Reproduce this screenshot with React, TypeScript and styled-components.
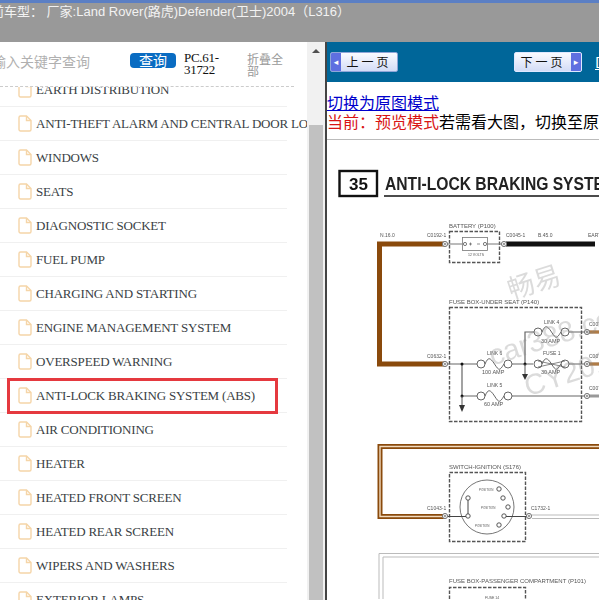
import React from "react";
import styled, { createGlobalStyle } from "styled-components";

const cjk = `"Noto Sans CJK SC", sans-serif`;

const Global = createGlobalStyle`
    html, body {
        margin: 0;
        padding: 0;
        width: 599px;
        height: 600px;
        overflow: hidden;
        background: #fff;
    }
`;

const Page = styled.div`
    display: flex;
    flex-direction: column;
    width: 599px;
    height: 600px;
    overflow: hidden;
`;

const TopBar = styled.div`
    height: 39px;
    flex: none;
    box-sizing: content-box;
    border-top: solid 3px #5b7fc4;
    background: #999;
    color: #f2f2f2;
    font: 13px/20px "Liberation Sans", ${cjk};
    white-space: nowrap;
    overflow: hidden;
`;

const TopText = styled.div`
    margin-left: -9px;
    margin-top: -1px;
`;

const Body = styled.div`
    flex: 1;
    display: flex;
    min-height: 0;
`;

const Side = styled.div`
    width: 307px;
    flex: none;
    display: flex;
    flex-direction: column;
    overflow: hidden;
`;

const Search = {
    Root: styled.div`
        height: 44px;
        flex: none;
        box-sizing: content-box;
        border-bottom: dashed 1px #ccc;
        margin-right: 13px;
        display: flex;
        align-items: flex-start;
    `,
    Placeholder: styled.span`
        width: 142px;
        margin-left: -22px;
        margin-top: 9px;
        margin-right: 10px;
        flex: none;
        font: 14px/20px ${cjk};
        color: #b0b0b0;
        white-space: nowrap;
    `,
    Button: styled.button`
        width: 46px;
        height: 15px;
        flex: none;
        margin-top: 11px;
        padding: 0;
        border: 0;
        border-radius: 4px;
        background: #0a6cc2;
        color: #fff;
        font: 14px/15px ${cjk};
    `,
    Code: styled.span`
        width: 50px;
        flex: none;
        margin: 10px 13px 0 8px;
        font: 13px/12px "Liberation Serif", serif;
        letter-spacing: -0.3px;
        color: #111;
    `,
    Collapse: styled.span`
        width: 38px;
        flex: none;
        margin-top: 11px;
        font: 12px/12px ${cjk};
        color: #999;
    `,
};

const List = styled.div`
    flex: 1;
    min-height: 0;
    overflow: hidden;
`;

const Rows = styled.ul`
    list-style: none;
    margin: -14px 0 0;
    padding: 0;
    width: 287px;
`;

const Row = styled.li<{ $marked?: boolean }>`
    position: relative;
    height: 33px;
    border-bottom: solid 1px #f0f0f0;
    display: flex;
    align-items: center;
    gap: 4px;
    padding-left: 18px;
    font: 13px/18px "Liberation Serif", serif;
    letter-spacing: -0.2px;
    color: #3a3f45;
    white-space: nowrap;
    &::after {
        content: "";
        display: ${p => (p.$marked ? "block" : "none")};
        position: absolute;
        left: 7px;
        top: -1px;
        width: 265px;
        height: 30px;
        border: solid 3px #e5393f;
    }
`;

const Scrollbar = {
    Track: styled.div`
        width: 18px;
        flex: none;
        box-sizing: border-box;
        padding: 0 2px;
        background: #f1f1f1;
        display: flex;
        flex-direction: column;
        align-items: stretch;
    `,
    Arrow: styled.div`
        width: 0;
        height: 0;
        margin: 7px auto 0;
        border-left: solid 4px transparent;
        border-right: solid 4px transparent;
        border-bottom: solid 4px #505050;
    `,
    Thumb: styled.div`
        flex: 1;
        margin-top: 72px;
        background: #c1c1c1;
    `,
};

const Divider = styled.div`
    width: 2px;
    flex: none;
    background: #444;
`;

const Main = styled.div`
    flex: 1;
    min-width: 0;
    display: flex;
    flex-direction: column;
    overflow: hidden;
`;

const Nav = styled.div`
    height: 40px;
    flex: none;
    background: #006699;
    display: flex;
    align-items: center;
    padding-left: 3px;
    white-space: nowrap;
`;

const PageButton = styled.div<{ $next?: boolean }>`
    width: 66px;
    height: 18px;
    flex: none;
    display: flex;
    flex-direction: ${p => (p.$next ? "row-reverse" : "row")};
    align-items: stretch;
    margin-left: ${p => (p.$next ? "116px" : "0")};
    border: solid 1px ${p => (p.$next ? "#dfe8ff" : "#8fa6d8")};
    border-radius: 2px;
    background: linear-gradient(#fafbff, #d3dcf6);
    color: #111;
    font: 12px/18px ${cjk};
    overflow: hidden;
`;

const PageCap = styled.span`
    width: 10px;
    flex: none;
    background: #5f6fe0;
    color: #fff;
    font: bold 9px/18px "DejaVu Sans", sans-serif;
    text-align: center;
`;

const PageLabel = styled.span`
    flex: 1;
    text-align: center;
    letter-spacing: 3px;
`;

const NavLink = styled.span`
    margin-left: 13px;
    color: #fff;
    font: 14px/18px ${cjk};
    text-decoration: underline;
`;

const Notice = styled.div`
    height: 58px;
    flex: none;
    box-sizing: border-box;
    padding-top: 11px;
    border-bottom: solid 1px #bbb;
    font: 16px/19px ${cjk};
    color: #000;
    white-space: nowrap;
`;

const SwitchLink = styled.a`
    display: block;
    color: #0000cc;
    text-decoration: underline;
`;

const Mode = styled.span`
    color: #d81414;
`;

const Diagram = styled.svg`
    display: block;
    flex: none;
    width: 272px;
    height: 459px;
    filter: blur(0.45px);
`;

const Label = styled.text<{ $size?: number }>`
    font-family: "Liberation Sans", sans-serif;
    font-size: ${p => p.$size ?? 5}px;
    fill: #555;
`;

const items = [
    "EARTH DISTRIBUTION",
    "ANTI-THEFT ALARM AND CENTRAL DOOR LOCKING",
    "WINDOWS",
    "SEATS",
    "DIAGNOSTIC SOCKET",
    "FUEL PUMP",
    "CHARGING AND STARTING",
    "ENGINE MANAGEMENT SYSTEM",
    "OVERSPEED WARNING",
    "ANTI-LOCK BRAKING SYSTEM (ABS)",
    "AIR CONDITIONING",
    "HEATER",
    "HEATED FRONT SCREEN",
    "HEATED REAR SCREEN",
    "WIPERS AND WASHERS",
    "EXTERIOR LAMPS",
];

const FileIcon = () => (
    <svg width="14" height="17" viewBox="0 0 14 17" fill="none" stroke="#f5d5a8" strokeWidth="1.4" style={{ flex: "none" }}>
        <path d="M1 2.500a1.500 1.500 0 0 1 1.500-1.500h6l4.500 4.500v9a1.500 1.500 0 0 1-1.500 1.500H2.500a1.500 1.500 0 0 1-1.500-1.500z" />
        <path d="M8.500 1v4.500H13" />
    </svg>
);

const Fuse = ({ x, y, w = 35 }: { x: number; y: number; w?: number }) => (
    <g fill="none" stroke="#555" strokeWidth="0.9">
        <circle cx={x + 4} cy={y} r="4" />
        <circle cx={x + w - 4} cy={y} r="4" />
        <path d={`M${x + 8} ${y}c3 -7 5 -7 ${w / 2 - 8} 0s5 7 ${w / 2 - 8} 0`} />
    </g>
);

const Connector = ({ x, y }: { x: number; y: number }) => (
    <g>
        <circle cx={x} cy={y} r="2.600" fill="#eee" stroke="#777" strokeWidth="1" />
        <circle cx={x} cy={y} r="0.900" fill="#777" />
    </g>
);

const Pin = ({ x, y }: { x: number; y: number }) => (
    <circle cx={x} cy={y} r="2.200" fill="#fff" stroke="#444" strokeWidth="0.900" />
);

const WiringDiagram = () => (
    <Diagram viewBox="327 141 272 459">
        <rect x="339.500" y="172" width="37.500" height="25" fill="none" stroke="#111" strokeWidth="2.400" />
        <text x="349" y="191" fontFamily="Liberation Sans" fontWeight="700" fontSize="17" fill="#111">35</text>
        <text x="385" y="191" fontFamily="Liberation Sans" fontWeight="700" fontSize="18" fill="#222" textLength="232" lengthAdjust="spacingAndGlyphs">ANTI-LOCK BRAKING SYSTEM</text>
        <path d="M384 197H599" stroke="#111" strokeWidth="1.500" />

        <path d="M445 245H379.500V365H445" fill="none" stroke="#8a4a0c" strokeWidth="5" />
        <path d="M506 245H595" stroke="#111" strokeWidth="5" />
        <Label x="380" y="238">N.16.0</Label>
        <Label x="427" y="238">C0192-1</Label>
        <Label x="506" y="238">C0045-1</Label>
        <Label x="538" y="238">B.45.0</Label>
        <Label x="588" y="238">EARTH</Label>
        <Label x="449" y="229" $size={6}>BATTERY (P100)</Label>
        <rect x="449.500" y="232.500" width="50" height="31" fill="none" stroke="#555" strokeWidth="1.400" strokeDasharray="3.500 1.500" />
        <path d="M448 245H462M487 245H503" stroke="#777" strokeWidth="1" />
        <rect x="462.500" y="238.500" width="25" height="13" fill="#fff" stroke="#777" strokeWidth="0.800" />
        <circle cx="465" cy="245" r="1.600" fill="#fff" stroke="#444" strokeWidth="0.700" />
        <circle cx="485" cy="245" r="1.600" fill="#fff" stroke="#444" strokeWidth="0.700" />
        <path d="M469 245h3M470.500 243.500v3M477 245h3" stroke="#444" strokeWidth="0.600" />
        <Label x="468" y="257" $size={3.500}>12 VOLTS</Label>
        <Connector x={445} y={245} />
        <Connector x={504} y={245} />

        <Label x="449" y="305" $size={6}>FUSE BOX-UNDER SEAT (P140)</Label>
        <rect x="449.500" y="308.500" width="132" height="114" fill="none" stroke="#555" strokeWidth="1.400" strokeDasharray="3.500 1.500" />
        <Label x="427" y="359">C0632-1</Label>
        <Label x="589" y="327">C0071</Label>
        <Label x="589" y="359">C0071</Label>
        <Label x="589" y="391">C0071</Label>
        <path d="M448 365H477M512 365H533M525 365V333H534M569 333H586M569 365H586M462 365V397H477M512 397H586" fill="none" stroke="#666" strokeWidth="1.200" />
        <circle cx="462" cy="365" r="1.500" fill="#111" />
        <circle cx="462" cy="397" r="1.500" fill="#111" />
        <circle cx="525" cy="365" r="1.500" fill="#111" />
        <path d="M525 365V375" stroke="#555" strokeWidth="1" />
        <path d="M522 375h6l-3 6z" fill="#333" />
        <path d="M462 397V406" stroke="#555" strokeWidth="1" />
        <path d="M459 406h6l-3 7z" fill="#333" />
        <Fuse x={534} y={333} />
        <Fuse x={477} y={365} />
        <Fuse x={534} y={365} />
        <path d="M538 362l27 6M538 368l27 -6" stroke="#555" strokeWidth="0.700" />
        <Fuse x={477} y={397} />
        <Label x="544" y="325">LINK 4</Label>
        <Label x="541" y="344" $size={5.500}>30 AMP</Label>
        <Label x="487" y="356">LINK 6</Label>
        <Label x="482" y="375" $size={5.500}>100 AMP</Label>
        <Label x="543" y="356">FUSE 1</Label>
        <Label x="541" y="375" $size={5.500}>30 AMP</Label>
        <Label x="487" y="388">LINK 5</Label>
        <Label x="484" y="407" $size={5.500}>60 AMP</Label>
        <path d="M587 333H599M587 365H599" stroke="#8a4a0c" strokeWidth="3" />
        <path d="M587 333H599M587 365H599" stroke="#e9c9a0" strokeWidth="0.800" />
        <path d="M587 397H599" stroke="#999" strokeWidth="3" />
        <Connector x={587} y={333} />
        <Connector x={587} y={365} />
        <Connector x={587} y={397} />
        <Connector x={445} y={365} />

        <path d="M445 517.500H380V447.500H599" fill="none" stroke="#8a4a0c" strokeWidth="5" />
        <path d="M445 517.500H380V447.500H599" fill="none" stroke="#f2dcc0" strokeWidth="1.400" />
        <Label x="449" y="470" $size={6}>SWITCH-IGNITION (S176)</Label>
        <rect x="449.500" y="473.500" width="76" height="69" fill="none" stroke="#555" strokeWidth="1.400" strokeDasharray="3.500 1.500" />
        <circle cx="487" cy="508" r="27" fill="none" stroke="#666" strokeWidth="0.900" />
        <Label x="427" y="511">C1043-1</Label>
        <Label x="531" y="511">C1732-1</Label>
        <path d="M448 517.500H468M468 499V517M504 517.500H528" stroke="#444" strokeWidth="1" fill="none" />
        <Pin x={468} y={499} />
        <Pin x={468} y={517} />
        <Pin x={499} y={490} />
        <Pin x={503} y={499} />
        <Pin x={508} y={508} />
        <Pin x={504} y={517} />
        <Pin x={499} y={526} />
        <Label x="479" y="492" $size={3}>POSITION</Label>
        <Label x="481" y="510" $size={3}>POSITION</Label>
        <Label x="475" y="528" $size={3}>POSITION</Label>
        <Connector x={445} y={517} />
        <Connector x={529} y={517} />
        <path d="M532 516H599M532 519.500H599" stroke="#bbb" strokeWidth="1" />

        <path d="M599 554.500H379V600M599 558H383V600" fill="none" stroke="#bbb" strokeWidth="1" />
        <Label x="449" y="584" $size={6}>FUSE BOX-PASSENGER COMPARTMENT (P101)</Label>
        <path d="M449.500 600V588.500H525.500V600" fill="none" stroke="#555" strokeWidth="1.400" strokeDasharray="3.500 1.500" />
        <Label x="485" y="600" $size={3.500}>FUSE 14</Label>

        <g fill="#888" fillOpacity="0.3" fontFamily="Liberation Sans" transform="rotate(-18 530 300)">
            <text x="512" y="295" fontSize="27" fontFamily={cjk}>畅易</text>
            <text x="474" y="352" fontSize="29">car388.com</text>
            <text x="498" y="392" fontSize="29">CY2016</text>
        </g>
    </Diagram>
);

const App: React.FC = () => (
    <Page>
        <Global />
        <TopBar>
            <TopText>前车型： 厂家:Land Rover(路虎)Defender(卫士)2004（L316）</TopText>
        </TopBar>
        <Body>
            <Side>
                <Search.Root>
                    <Search.Placeholder>请输入关键字查询</Search.Placeholder>
                    <Search.Button>查询</Search.Button>
                    <Search.Code>PC.61-31722</Search.Code>
                    <Search.Collapse>折叠全部</Search.Collapse>
                </Search.Root>
                <List>
                    <Rows>
                        {items.map(name => (
                            <Row key={name} $marked={name.endsWith("(ABS)")}>
                                <FileIcon />
                                {name}
                            </Row>
                        ))}
                    </Rows>
                </List>
            </Side>
            <Scrollbar.Track>
                <Scrollbar.Arrow />
                <Scrollbar.Thumb />
            </Scrollbar.Track>
            <Divider />
            <Main>
                <Nav>
                    <PageButton>
                        <PageCap>◂</PageCap>
                        <PageLabel>上一页</PageLabel>
                    </PageButton>
                    <PageButton $next>
                        <PageCap>▸</PageCap>
                        <PageLabel>下一页</PageLabel>
                    </PageButton>
                    <NavLink>D</NavLink>
                </Nav>
                <Notice>
                    <SwitchLink>切换为原图模式</SwitchLink>
                    <Mode>当前：预览模式</Mode>若需看大图，切换至原图模式
                </Notice>
                <WiringDiagram />
            </Main>
        </Body>
    </Page>
);

export default App;
